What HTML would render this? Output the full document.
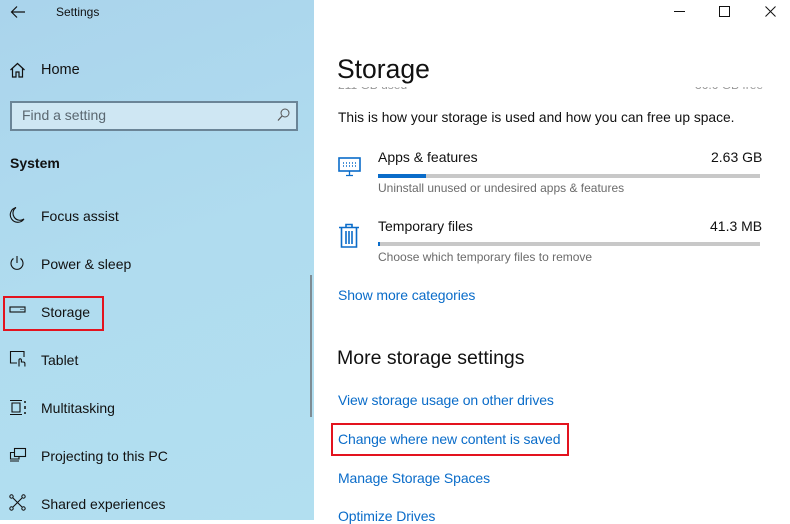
<!DOCTYPE html>
<html><head><meta charset="utf-8"><style>
*{margin:0;padding:0;box-sizing:border-box}
body{width:790px;height:520px;overflow:hidden;font-family:"Segoe UI","Liberation Sans",sans-serif;background:#fff;position:relative;color:#000}
#side{position:absolute;left:0;top:0;width:314px;height:520px;background:linear-gradient(160deg,#aad4ec 0%,#b0dcef 50%,#b2dff0 100%)}
.t{position:absolute;white-space:nowrap}
.it{position:absolute;left:41px;font-size:14px;color:#111}
.ic{position:absolute;left:9px}
.lk{position:absolute;left:338px;font-size:14px;color:#0a6cc9;white-space:nowrap;letter-spacing:-0.1px}
.bar{position:absolute;left:378px;width:382px;height:4px;background:#c8c8c8}
.sub{position:absolute;left:378px;font-size:12px;color:#6b6b6b;white-space:nowrap}
</style></head><body>
<div id="side">
<svg class="t" style="left:10px;top:5px" width="16" height="14" viewBox="0 0 16 14"><path d="M15 7H2M7 1.5L1.5 7L7 12.5" fill="none" stroke="#111" stroke-width="1.2"/></svg>
<div class="t" style="left:56px;top:5px;font-size:12px;color:#111">Settings</div>
<svg class="ic" style="top:62px" width="17" height="16" viewBox="0 0 17 16"><path d="M1.5 8L8.5 1.5L15.5 8M3.5 6.5V15H7V10H10V15H13.5V6.5" fill="none" stroke="#111" stroke-width="1.2"/></svg>
<div class="it" style="top:62px;font-size:14.5px">Home</div>
<div class="t" style="left:10px;top:101px;width:288px;height:30px;border:2px solid #6b8597;background:#cfe7f3"></div>
<div class="t" style="left:22px;top:107px;font-size:14px;color:#5a6770">Find a setting</div>
<svg class="t" style="left:277px;top:108px" width="13" height="14" viewBox="0 0 13 14"><circle cx="8" cy="5" r="4" fill="none" stroke="#555" stroke-width="1"/><path d="M5 8L1 12.5" stroke="#555" stroke-width="1.2"/></svg>
<div class="t" style="left:10px;top:155px;font-size:14px;font-weight:bold;color:#111">System</div>

<svg class="ic" style="top:206px" width="16" height="18" viewBox="0 0 16 18"><path d="M7 1.5A7.5 7.5 0 1 0 15 13A6.5 6.5 0 0 1 7 1.5Z" fill="none" stroke="#111" stroke-width="1.1"/></svg>
<div class="it" style="top:208px">Focus assist</div>
<svg class="ic" style="top:255px" width="16" height="17" viewBox="0 0 16 17"><path d="M8 1V8M4.5 3.5A6 6 0 1 0 11.5 3.5" fill="none" stroke="#111" stroke-width="1.1"/></svg>
<div class="it" style="top:256px">Power &amp; sleep</div>
<svg class="ic" style="top:305px" width="18" height="10" viewBox="0 0 18 10"><rect x="1" y="2" width="15" height="5" fill="none" stroke="#111" stroke-width="1.1"/><path d="M11.5 4.5h1M13.5 4.5h1" stroke="#111"/></svg>
<div class="it" style="top:304px">Storage</div>
<div class="t" style="left:3px;top:296px;width:101px;height:35px;border:2.5px solid #e3131e"></div>
<svg class="ic" style="top:350px" width="18" height="18" viewBox="0 0 18 18"><path d="M8 13H1.5V1.5H15V7" fill="none" stroke="#111" stroke-width="1.1"/><path d="M10 16.5V10a1.2 1.2 0 0 1 2.4 0V12h2a1.5 1.5 0 0 1 1.5 1.5v3" fill="none" stroke="#111" stroke-width="1.1"/></svg>
<div class="it" style="top:352px">Tablet</div>
<svg class="ic" style="top:399px" width="18" height="17" viewBox="0 0 18 17"><path d="M1 1.5H13M1 15.5H13M3 4H11V13H3Z" fill="none" stroke="#111" stroke-width="1.1"/><path d="M16 2v2M16 7v3M16 13v2" stroke="#111" stroke-width="1.5"/></svg>
<div class="it" style="top:400px">Multitasking</div>
<svg class="ic" style="top:447px" width="18" height="16" viewBox="0 0 18 16"><rect x="5.5" y="1.5" width="11" height="8" fill="none" stroke="#111" stroke-width="1.1"/><path d="M5 5.5H1.5V12H10V10M1 14H10" fill="none" stroke="#111" stroke-width="1.1"/></svg>
<div class="it" style="top:448px">Projecting to this PC</div>
<svg class="ic" style="top:494px" width="17" height="17" viewBox="0 0 17 17"><circle cx="2.5" cy="2.5" r="1.7" fill="none" stroke="#111"/><circle cx="14.5" cy="2.5" r="1.7" fill="none" stroke="#111"/><circle cx="2.5" cy="14.5" r="1.7" fill="none" stroke="#111"/><circle cx="14.5" cy="14.5" r="1.7" fill="none" stroke="#111"/><path d="M4 4L13 13M13 4L4 13" stroke="#111" stroke-width="1.1"/></svg>
<div class="it" style="top:496px">Shared experiences</div>
<div class="t" style="left:310px;top:275px;width:2px;height:142px;background:#7e8c94"></div>
</div>

<svg class="t" style="left:674px;top:11px" width="12" height="2"><rect width="11" height="1" fill="#111"/></svg>
<svg class="t" style="left:719px;top:6px" width="12" height="12"><rect x="0.5" y="0.5" width="10" height="10" fill="none" stroke="#111"/></svg>
<svg class="t" style="left:765px;top:6px" width="12" height="12"><path d="M0.5 0.5L10.5 10.5M10.5 0.5L0.5 10.5" stroke="#111"/></svg>

<div class="t" style="left:337px;top:87px;width:440px;height:8px;overflow:hidden">
<div class="t" style="left:1px;top:-9px;font-size:12px;color:#999">211 GB used</div>
<div class="t" style="left:358px;top:-9px;font-size:12px;color:#999">36.6 GB free</div>
</div>
<div class="t" style="left:337px;top:54px;font-size:26.5px;color:#111">Storage</div>
<div class="t" style="left:338px;top:110px;font-size:13.8px;color:#111">This is how your storage is used and how you can free up space.</div>

<svg class="t" style="left:338px;top:157px" width="23" height="20" viewBox="0 0 23 20"><rect x="1" y="1" width="21" height="13" fill="none" stroke="#0a6cc9" stroke-width="1.6"/><path d="M5 6h1M8 6h1M11 6h1M14 6h1M17 6h1M5 9h1M8 9h1M11 9h1M14 9h1M17 9h1" stroke="#0a6cc9" stroke-width="1.5"/><path d="M11.5 14v4M8 18.5h7" stroke="#0a6cc9" stroke-width="1.3"/></svg>
<div class="t" style="left:378px;top:149px;font-size:14px;color:#111">Apps &amp; features</div>
<div class="t" style="left:711px;top:149px;font-size:14px;color:#111">2.63 GB</div>
<div class="bar" style="top:174px"><div style="width:48px;height:4px;background:#0a6cc9"></div></div>
<div class="sub" style="top:181px">Uninstall unused or undesired apps &amp; features</div>

<svg class="t" style="left:338px;top:223px" width="22" height="26" viewBox="0 0 22 26"><path d="M1 4.5H21M8 4V1.5H14V4M3.5 5V24H18.5V5M8 8V21M11 8V21M14 8V21" fill="none" stroke="#0a6cc9" stroke-width="1.6"/></svg>
<div class="t" style="left:378px;top:218px;font-size:14px;color:#111">Temporary files</div>
<div class="t" style="left:710px;top:218px;font-size:14px;color:#111">41.3 MB</div>
<div class="bar" style="top:242px"><div style="width:2px;height:4px;background:#0a6cc9"></div></div>
<div class="sub" style="top:250px">Choose which temporary files to remove</div>

<div class="lk" style="top:287px">Show more categories</div>
<div class="t" style="left:337px;top:347px;font-size:19.5px;color:#111">More storage settings</div>
<div class="lk" style="top:392px">View storage usage on other drives</div>
<div class="lk" style="top:431px">Change where new content is saved</div>
<div class="t" style="left:331px;top:423px;width:238px;height:33px;border:2.5px solid #e3131e"></div>
<div class="lk" style="top:470px">Manage Storage Spaces</div>
<div class="lk" style="top:508px">Optimize Drives</div>
</body></html>
